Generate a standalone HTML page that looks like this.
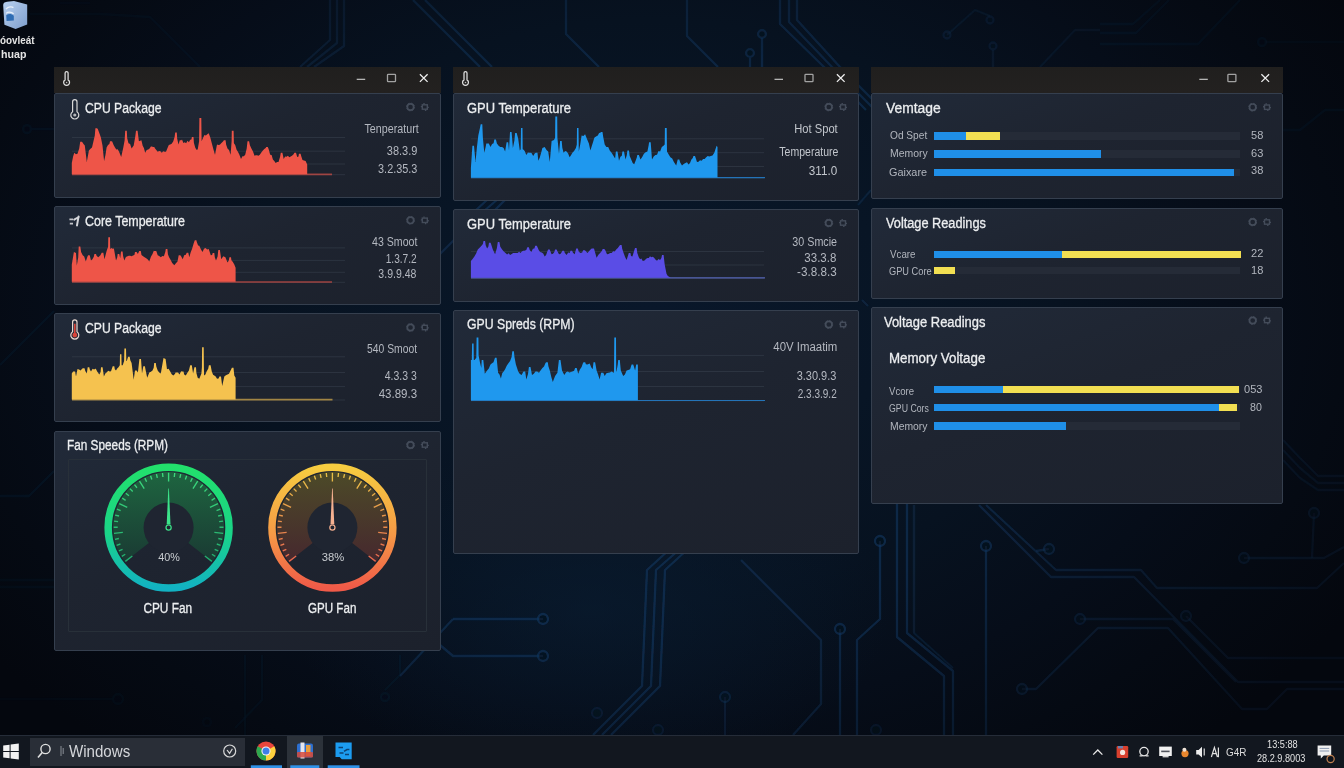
<!DOCTYPE html>
<html lang="en"><head><meta charset="utf-8"><title>Hardware Monitor Desktop</title>
<style>
*{margin:0;padding:0;box-sizing:border-box}
html,body{width:1344px;height:768px;overflow:hidden;background:#050912}
body{font-family:"Liberation Sans",sans-serif;position:relative;color:#dcdfe4}
#desk{position:absolute;left:0;top:0;width:1344px;height:768px;
 background:radial-gradient(ellipse 300px 170px at 590px 610px, rgba(10,30,52,.55) 0%, rgba(10,30,52,0) 100%),radial-gradient(ellipse 820px 580px at 650px 310px, #09172a 0%, #081525 30%, #071220 50%, #060d19 70%, #050a13 85%, #04070e 100%);}
#bgsvg,#fg{position:absolute;left:0;top:0;width:1344px;height:768px}
#fg{pointer-events:none}
.t{position:absolute;white-space:nowrap;display:block}
#texts{position:absolute;left:0;top:0;width:1344px;height:768px;will-change:transform}
.win{position:absolute}
.tb{position:absolute;left:0;top:0;width:100%;height:25.6px;background:linear-gradient(#201f1e,#232120)}
.p{position:absolute;left:0;width:100%;background:linear-gradient(160deg,#212a39 0%,#1e2430 45%,#1c212c 100%);border:1px solid #353f4e;border-radius:2px}
.bar{position:absolute;height:7.5px}
.trk{position:absolute;height:7.5px;background:#252b37}
#task{position:absolute;left:0;top:735px;width:1344px;height:33px;background:#12171f;border-top:1px solid #252c38}
#search{position:absolute;left:30px;top:1.6px;width:215px;height:28.8px;background:#292e37}
</style></head><body>
<div id="desk"></div>

<svg id="bgsvg" viewBox="0 0 1344 768"><defs><filter id="bl" x="-5%" y="-5%" width="110%" height="110%"><feGaussianBlur stdDeviation="0.75"/></filter><radialGradient id="vg" gradientUnits="userSpaceOnUse" cx="640" cy="380" r="760" gradientTransform="translate(0 118) scale(1 0.69)"><stop offset="0" stop-color="#fff"/><stop offset="0.5" stop-color="#fff"/><stop offset="0.8" stop-color="#8a8a8a"/><stop offset="1" stop-color="#555"/></radialGradient><mask id="vm" maskUnits="userSpaceOnUse" x="0" y="0" width="1344" height="768"><rect width="1344" height="768" fill="url(#vg)"/></mask></defs><g mask="url(#vm)"><g filter="url(#bl)">
<polyline points="670,549 647,570 642,686 593,735" fill="none" stroke="#123860" stroke-width="2.3" opacity="0.60" stroke-linejoin="round"/>
<polyline points="680,549 656,570 651,686 602,735" fill="none" stroke="#123860" stroke-width="2.3" opacity="0.60" stroke-linejoin="round"/>
<polyline points="688,549 665,570 660,686 611,735" fill="none" stroke="#123860" stroke-width="2.3" opacity="0.60" stroke-linejoin="round"/>
<polyline points="741,560 821,640 821,704 793,735" fill="none" stroke="#123860" stroke-width="2.3" opacity="0.50" stroke-linejoin="round"/>
<polyline points="840,629 840,735" fill="none" stroke="#123860" stroke-width="2.3" opacity="0.60" stroke-linejoin="round"/>
<circle cx="840" cy="629" r="5.0" fill="#08131f" stroke="#123860" stroke-width="2.3" opacity="0.60"/>
<polyline points="880,541 880,619 857,640 857,735" fill="none" stroke="#123860" stroke-width="2.3" opacity="0.60" stroke-linejoin="round"/>
<circle cx="880" cy="541" r="5.0" fill="#08131f" stroke="#123860" stroke-width="2.3" opacity="0.60"/>
<polyline points="897,504 897,637 944,676 944,735" fill="none" stroke="#123860" stroke-width="2.3" opacity="0.60" stroke-linejoin="round"/>
<polyline points="907,504 907,633 953,671 953,735" fill="none" stroke="#123860" stroke-width="2.3" opacity="0.60" stroke-linejoin="round"/>
<polyline points="986,546 986,735" fill="none" stroke="#123860" stroke-width="2.3" opacity="0.60" stroke-linejoin="round"/>
<circle cx="986" cy="546" r="5.0" fill="#08131f" stroke="#123860" stroke-width="2.3" opacity="0.60"/>
<polyline points="979,505 1051,577 1134,577 1238,682 1344,682" fill="none" stroke="#123860" stroke-width="2.3" opacity="0.50" stroke-linejoin="round"/>
<polyline points="986,505 1056,570 1141,570 1157,588 1317,588 1344,563" fill="none" stroke="#123860" stroke-width="2.3" opacity="0.50" stroke-linejoin="round"/>
<polyline points="1049,549 1036,551" fill="none" stroke="#123860" stroke-width="2.3" opacity="0.50" stroke-linejoin="round"/>
<circle cx="1049" cy="549" r="5.0" fill="#08131f" stroke="#123860" stroke-width="2.3" opacity="0.50"/>
<polyline points="1022,689 1036,689 1098,628 1168,628 1242,709 1267,709 1287,689 1344,689" fill="none" stroke="#123860" stroke-width="2.3" opacity="0.50" stroke-linejoin="round"/>
<circle cx="1022" cy="689" r="5.0" fill="#08131f" stroke="#123860" stroke-width="2.3" opacity="0.50"/>
<polyline points="1080,619 1173,619 1236,682" fill="none" stroke="#123860" stroke-width="2.3" opacity="0.45" stroke-linejoin="round"/>
<circle cx="1080" cy="619" r="5.0" fill="#08131f" stroke="#123860" stroke-width="2.3" opacity="0.45"/>
<polyline points="1186,616 1228,658 1344,658" fill="none" stroke="#123860" stroke-width="2.3" opacity="0.45" stroke-linejoin="round"/>
<circle cx="1186" cy="616" r="5.0" fill="#08131f" stroke="#123860" stroke-width="2.3" opacity="0.45"/>
<polyline points="1244,558 1324,558 1344,547" fill="none" stroke="#123860" stroke-width="2.3" opacity="0.50" stroke-linejoin="round"/>
<circle cx="1244" cy="558" r="5.0" fill="#08131f" stroke="#123860" stroke-width="2.3" opacity="0.50"/>
<polyline points="1314,513 1312,558" fill="none" stroke="#123860" stroke-width="2.3" opacity="0.45" stroke-linejoin="round"/>
<circle cx="1314" cy="513" r="5.0" fill="#08131f" stroke="#123860" stroke-width="2.3" opacity="0.50"/>
<polyline points="914,505 914,633 953,668" fill="none" stroke="#123860" stroke-width="2.3" opacity="0.35" stroke-linejoin="round"/>
<polyline points="453,619 543,619" fill="none" stroke="#123860" stroke-width="2.3" opacity="0.60" stroke-linejoin="round"/>
<circle cx="543" cy="619" r="5.0" fill="#08131f" stroke="#123860" stroke-width="2.3" opacity="0.60"/>
<polyline points="440,645 453,656 543,656" fill="none" stroke="#123860" stroke-width="2.3" opacity="0.60" stroke-linejoin="round"/>
<circle cx="543" cy="656" r="5.0" fill="#08131f" stroke="#123860" stroke-width="2.3" opacity="0.60"/>
<polyline points="400,676 453,619" fill="none" stroke="#123860" stroke-width="2.3" opacity="0.55" stroke-linejoin="round"/>
<polyline points="725,697 725,735" fill="none" stroke="#123860" stroke-width="2.3" opacity="0.40" stroke-linejoin="round"/>
<circle cx="725" cy="697" r="5.0" fill="#08131f" stroke="#123860" stroke-width="2.3" opacity="0.45"/>
<circle cx="597" cy="713" r="5.0" fill="#08131f" stroke="#123860" stroke-width="2.3" opacity="0.35"/>
<circle cx="658" cy="730" r="5.0" fill="#08131f" stroke="#123860" stroke-width="2.3" opacity="0.35"/>
<circle cx="876" cy="730" r="5.0" fill="#08131f" stroke="#123860" stroke-width="2.3" opacity="0.35"/>
<polyline points="0,496 29,496 54,471" fill="none" stroke="#123860" stroke-width="2.3" opacity="0.30" stroke-linejoin="round"/>
<polyline points="0,580 54,580" fill="none" stroke="#123860" stroke-width="2.3" opacity="0.22" stroke-linejoin="round"/>
<polyline points="0,587 54,587" fill="none" stroke="#123860" stroke-width="2.3" opacity="0.22" stroke-linejoin="round"/>
<polyline points="0,699 112,699" fill="none" stroke="#123860" stroke-width="2.3" opacity="0.16" stroke-linejoin="round"/>
<circle cx="118" cy="699" r="5.0" fill="#08131f" stroke="#123860" stroke-width="2.3" opacity="0.20"/>
<circle cx="27" cy="129" r="4" fill="#08131f" stroke="#123860" stroke-width="2.3" opacity="0.30"/>
<polyline points="32,129 54,129" fill="none" stroke="#123860" stroke-width="2.3" opacity="0.30" stroke-linejoin="round"/>
<polyline points="0,365 54,311" fill="none" stroke="#123860" stroke-width="2.3" opacity="0.28" stroke-linejoin="round"/>
<polyline points="245,655 245,735" fill="none" stroke="#123860" stroke-width="2.3" opacity="0.18" stroke-linejoin="round"/>
<polyline points="262,655 262,700 235,728" fill="none" stroke="#123860" stroke-width="2.3" opacity="0.18" stroke-linejoin="round"/>
<polyline points="385,690 400,675 400,655" fill="none" stroke="#123860" stroke-width="2.3" opacity="0.18" stroke-linejoin="round"/>
<circle cx="385" cy="697" r="4" fill="#08131f" stroke="#123860" stroke-width="2.3" opacity="0.18"/>
<circle cx="207" cy="722" r="4" fill="#08131f" stroke="#123860" stroke-width="2.3" opacity="0.14"/>
<polyline points="1283,440 1300,458 1318,476 1344,476" fill="none" stroke="#123860" stroke-width="2.3" opacity="0.40" stroke-linejoin="round"/>
<polyline points="1283,450 1300,468 1318,483 1344,483" fill="none" stroke="#123860" stroke-width="2.3" opacity="0.40" stroke-linejoin="round"/>
<polyline points="1283,460 1300,478 1318,490 1344,490" fill="none" stroke="#123860" stroke-width="2.3" opacity="0.40" stroke-linejoin="round"/>
<polyline points="1283,130 1300,130 1325,110 1344,110" fill="none" stroke="#123860" stroke-width="2.3" opacity="0.30" stroke-linejoin="round"/>
<circle cx="1262" cy="42" r="4" fill="#08131f" stroke="#123860" stroke-width="2.3" opacity="0.30"/>
<polyline points="1266,42 1344,42" fill="none" stroke="#123860" stroke-width="2.3" opacity="0.22" stroke-linejoin="round"/>
<polyline points="1100,24 1133,24 1160,0" fill="none" stroke="#123860" stroke-width="2.3" opacity="0.30" stroke-linejoin="round"/>
<polyline points="1100,33 1136,33 1169,0" fill="none" stroke="#123860" stroke-width="2.3" opacity="0.30" stroke-linejoin="round"/>
<polyline points="1100,44 1198,44 1240,0" fill="none" stroke="#123860" stroke-width="2.3" opacity="0.30" stroke-linejoin="round"/>
<polyline points="330,0 330,40 300,67" fill="none" stroke="#123860" stroke-width="2.3" opacity="0.50" stroke-linejoin="round"/>
<polyline points="337,0 337,43 307,67" fill="none" stroke="#123860" stroke-width="2.3" opacity="0.50" stroke-linejoin="round"/>
<polyline points="344,0 344,46 314,67" fill="none" stroke="#123860" stroke-width="2.3" opacity="0.50" stroke-linejoin="round"/>
<polyline points="413,0 480,67" fill="none" stroke="#123860" stroke-width="2.3" opacity="0.65" stroke-linejoin="round"/>
<polyline points="425,0 492,67" fill="none" stroke="#123860" stroke-width="2.3" opacity="0.65" stroke-linejoin="round"/>
<polyline points="566,0 566,34 599,67" fill="none" stroke="#123860" stroke-width="2.3" opacity="0.60" stroke-linejoin="round"/>
<polyline points="687,0 687,36 718,67" fill="none" stroke="#123860" stroke-width="2.3" opacity="0.60" stroke-linejoin="round"/>
<circle cx="762" cy="34" r="3.9" fill="#08131f" stroke="#123860" stroke-width="2.3" opacity="0.65"/>
<polyline points="762,38 762,67" fill="none" stroke="#123860" stroke-width="2.3" opacity="0.65" stroke-linejoin="round"/>
<circle cx="750" cy="53" r="3.9" fill="#08131f" stroke="#123860" stroke-width="2.3" opacity="0.60"/>
<polyline points="750,58 750,67" fill="none" stroke="#123860" stroke-width="2.3" opacity="0.60" stroke-linejoin="round"/>
<polyline points="780,0 780,24 824,67 866,110" fill="none" stroke="#123860" stroke-width="2.3" opacity="0.65" stroke-linejoin="round"/>
<polyline points="789,0 789,22 832,67 875,110" fill="none" stroke="#123860" stroke-width="2.3" opacity="0.65" stroke-linejoin="round"/>
<polyline points="797,0 797,20 840,67 883,110" fill="none" stroke="#123860" stroke-width="2.3" opacity="0.65" stroke-linejoin="round"/>
<circle cx="947" cy="35" r="3.5" fill="#08131f" stroke="#123860" stroke-width="2.3" opacity="0.45"/>
<circle cx="990" cy="20" r="3.5" fill="#08131f" stroke="#123860" stroke-width="2.3" opacity="0.45"/>
<circle cx="993" cy="46" r="3.5" fill="#08131f" stroke="#123860" stroke-width="2.3" opacity="0.45"/>
<polyline points="947,35 975,10 990,16" fill="none" stroke="#123860" stroke-width="2.3" opacity="0.35" stroke-linejoin="round"/>
<polyline points="993,50 993,67" fill="none" stroke="#123860" stroke-width="2.3" opacity="0.35" stroke-linejoin="round"/>
<polyline points="1040,67 1075,30 1100,30" fill="none" stroke="#123860" stroke-width="2.3" opacity="0.35" stroke-linejoin="round"/>
<polyline points="30,14 100,14 150,17 200,67" fill="none" stroke="#123860" stroke-width="2.3" opacity="0.22" stroke-linejoin="round"/>
<polyline points="60,3 90,3" fill="none" stroke="#123860" stroke-width="2.3" opacity="0.15" stroke-linejoin="round"/>
<polyline points="858,205 871,190" fill="none" stroke="#123860" stroke-width="2.3" opacity="0.35" stroke-linejoin="round"/>
<polyline points="862,300 868,306" fill="none" stroke="#123860" stroke-width="2.3" opacity="0.40" stroke-linejoin="round"/>
<polyline points="475,211 488,199" fill="none" stroke="#123860" stroke-width="2.3" opacity="0.60" stroke-linejoin="round"/>
<polyline points="484,211 498,199" fill="none" stroke="#123860" stroke-width="2.3" opacity="0.60" stroke-linejoin="round"/>
<polyline points="494,211 506,199" fill="none" stroke="#123860" stroke-width="2.3" opacity="0.60" stroke-linejoin="round"/>
<polyline points="440,254 454,240" fill="none" stroke="#123860" stroke-width="2.3" opacity="0.50" stroke-linejoin="round"/>
</g></g></svg>
<div id="icon" style="position:absolute;left:0;top:0;width:40px;height:62px"></div>
<div class="win" style="left:54px;top:67px;width:387px;height:0"><div class="tb"></div><div class="p" style="top:26px;height:104.5px"></div><div class="p" style="top:139px;height:98.60000000000002px"></div><div class="p" style="top:246px;height:109px"></div><div class="p" style="top:364px;height:220px"></div></div>
<div class="win" style="left:453px;top:67px;width:406px;height:0"><div class="tb"></div><div class="p" style="top:26px;height:107.5px"></div><div class="p" style="top:142px;height:92.80000000000001px"></div><div class="p" style="top:243.2px;height:244.2px"></div></div>
<div class="win" style="left:871px;top:67px;width:412px;height:0"><div class="tb"></div><div class="p" style="top:26px;height:106px"></div><div class="p" style="top:141px;height:90.5px"></div><div class="p" style="top:239.5px;height:197.5px"></div></div>
<div style="position:absolute;left:68px;top:459px;width:359px;height:173px;border:1px solid #283039;border-radius:1px"></div>
<div class="trk" style="left:933.7px;top:132.3px;width:306.3px"></div><div class="bar" style="left:933.7px;top:132.3px;width:32.3px;background:#1f8fe8"></div><div class="bar" style="left:966.0px;top:132.3px;width:34.2px;background:#f2df52"></div><div class="trk" style="left:933.7px;top:150.4px;width:306.3px"></div><div class="bar" style="left:933.7px;top:150.4px;width:167.3px;background:#1f8fe8"></div><div class="trk" style="left:933.7px;top:168.6px;width:306.3px"></div><div class="bar" style="left:933.7px;top:168.6px;width:300.5px;background:#1f8fe8"></div><div class="trk" style="left:933.7px;top:250.8px;width:306.3px"></div><div class="bar" style="left:933.7px;top:250.8px;width:128.3px;background:#1f8fe8"></div><div class="bar" style="left:1062.0px;top:250.8px;width:179.4px;background:#f2df52"></div><div class="trk" style="left:933.7px;top:266.6px;width:306.3px"></div><div class="bar" style="left:933.7px;top:266.6px;width:20.9px;background:#f2df52"></div><div class="trk" style="left:933.7px;top:385.9px;width:306.3px"></div><div class="bar" style="left:933.7px;top:385.9px;width:69.7px;background:#1f8fe8"></div><div class="bar" style="left:1003.4px;top:385.9px;width:235.4px;background:#f2df52"></div><div class="trk" style="left:933.7px;top:403.9px;width:306.3px"></div><div class="bar" style="left:933.7px;top:403.9px;width:285.3px;background:#1f8fe8"></div><div class="bar" style="left:1219.0px;top:403.9px;width:17.5px;background:#f2df52"></div><div class="trk" style="left:933.7px;top:422.1px;width:306.3px"></div><div class="bar" style="left:933.7px;top:422.1px;width:131.9px;background:#1f8fe8"></div>
<div id="task"><div id="search"></div></div>
<svg id="fg" viewBox="0 0 1344 768"><line x1="72.0" y1="137.5" x2="345.0" y2="137.5" stroke="#39424f" stroke-width="1" opacity="0.55"/><line x1="72.0" y1="151.2" x2="345.0" y2="151.2" stroke="#39424f" stroke-width="1" opacity="0.55"/><line x1="72.0" y1="164.0" x2="345.0" y2="164.0" stroke="#39424f" stroke-width="1" opacity="0.55"/><line x1="72.0" y1="174.7" x2="345.0" y2="174.7" stroke="#39424f" stroke-width="1" opacity="0.55"/><line x1="72.0" y1="174.4" x2="332.0" y2="174.4" stroke="#ee5548" stroke-width="1.7" opacity="0.6"/><path d="M71.8,174.2 L71.8,163.1 L73.1,156.5 L74.3,152.7 L75.9,154.2 L77.5,153.8 L79.2,148.4 L80.2,141.7 L81.8,141.7 L82.2,141.9 L83.5,144.0 L84.8,145.4 L86.8,162.1 L88.9,150.6 L90.5,148.7 L92.0,147.5 L93.4,141.4 L94.8,135.5 L95.4,128.3 L97.0,128.3 L97.8,129.0 L99.3,132.9 L100.9,137.4 L102.5,145.4 L104.1,161.0 L105.4,155.2 L106.6,147.5 L108.0,145.0 L109.4,144.0 L110.0,141.2 L111.6,141.2 L112.2,141.4 L113.6,145.0 L115.0,147.5 L116.3,149.5 L117.7,149.2 L119.1,151.7 L121.2,156.9 L123.3,147.5 L124.6,140.5 L125.2,130.8 L126.8,130.8 L127.2,138.3 L128.5,143.3 L130.1,144.1 L131.6,148.5 L133.7,145.4 L135.3,136.3 L136.0,130.8 L137.6,130.8 L138.9,141.2 L140.2,140.7 L141.4,140.2 L142.7,145.7 L143.9,147.9 L145.2,152.7 L146.7,150.0 L148.3,149.6 L149.6,148.5 L150.9,146.5 L152.2,146.6 L152.7,147.1 L154.3,147.1 L154.9,148.2 L156.3,149.9 L157.7,151.7 L159.1,150.9 L160.4,151.3 L161.8,152.7 L163.2,151.2 L164.6,151.7 L166.0,151.7 L167.4,148.3 L168.8,145.0 L170.2,144.4 L171.7,143.8 L173.3,141.2 L174.6,136.9 L175.2,132.5 L176.8,132.5 L177.2,138.7 L178.5,144.4 L179.8,140.2 L181.4,140.2 L182.0,139.6 L183.4,143.1 L184.8,142.3 L186.1,143.3 L187.5,140.8 L188.9,142.3 L190.2,139.8 L191.4,139.4 L191.9,137.1 L193.5,137.1 L193.9,142.8 L195.2,147.5 L196.4,149.8 L197.7,149.6 L199.1,141.2 L199.4,117.9 L201.3,117.9 L201.6,141.2 L203.1,137.7 L204.5,135.0 L205.9,135.4 L207.3,134.3 L208.7,133.3 L210.3,137.5 L211.8,143.3 L213.4,149.2 L215.0,154.8 L217.0,144.4 L218.4,145.1 L219.8,144.7 L221.2,143.3 L223.0,141.6 L223.9,140.2 L225.6,140.2 L226.1,144.5 L227.5,148.5 L229.0,149.9 L230.6,154.8 L231.6,141.2 L231.8,130.8 L233.6,130.8 L233.9,143.3 L235.2,145.0 L236.6,149.7 L237.9,151.7 L239.4,154.8 L241.0,159.0 L242.4,156.3 L243.8,156.2 L245.2,154.8 L246.7,148.5 L247.5,141.2 L249.1,141.2 L249.9,145.3 L251.4,148.5 L253.0,151.6 L254.5,155.8 L255.8,155.2 L257.1,155.2 L258.4,155.8 L259.8,154.8 L261.3,152.6 L262.9,150.6 L264.3,148.9 L265.7,148.0 L266.2,147.1 L267.8,147.1 L268.6,149.1 L270.2,154.8 L271.6,155.1 L272.9,159.5 L274.3,161.0 L275.7,162.9 L277.1,161.9 L278.5,162.1 L280.1,156.8 L280.8,152.7 L282.4,152.7 L283.7,159.0 L285.1,156.6 L286.5,156.7 L287.9,155.8 L289.3,157.3 L290.7,156.6 L292.0,155.8 L293.6,154.2 L294.4,152.7 L296.0,152.7 L297.2,156.9 L298.5,156.4 L298.9,153.8 L300.6,153.8 L301.1,155.8 L302.5,160.0 L304.0,160.4 L305.6,161.0 L307.2,164.6 L307.2,174.2 Z" fill="#ee5548"/><line x1="72.0" y1="247.9" x2="345.0" y2="247.9" stroke="#39424f" stroke-width="1" opacity="0.55"/><line x1="72.0" y1="260.4" x2="345.0" y2="260.4" stroke="#39424f" stroke-width="1" opacity="0.55"/><line x1="72.0" y1="272.3" x2="345.0" y2="272.3" stroke="#39424f" stroke-width="1" opacity="0.55"/><line x1="72.0" y1="282.3" x2="345.0" y2="282.3" stroke="#39424f" stroke-width="1" opacity="0.55"/><line x1="72.0" y1="282.0" x2="332.0" y2="282.0" stroke="#ee5548" stroke-width="1.7" opacity="0.6"/><path d="M71.8,281.8 L71.8,264.5 L73.9,252.0 L76.0,253.1 L76.8,265.6 L78.2,257.4 L78.7,246.4 L80.3,246.4 L81.1,252.1 L82.7,255.2 L84.2,256.6 L85.8,261.4 L87.4,256.7 L88.1,255.2 L89.7,255.2 L91.0,260.4 L92.4,259.2 L93.8,256.8 L94.4,254.1 L96.0,254.1 L96.7,256.1 L98.3,257.2 L100.4,255.2 L101.7,252.7 L103.3,252.7 L104.5,259.3 L106.6,251.0 L108.1,246.8 L108.3,237.2 L110.0,237.2 L110.2,248.9 L111.4,247.9 L112.7,248.8 L113.9,248.5 L116.0,260.4 L117.2,257.4 L117.7,254.1 L119.3,254.1 L120.2,258.3 L121.0,251.4 L122.6,251.4 L123.1,256.0 L124.3,260.4 L125.9,256.9 L127.5,256.2 L128.8,255.8 L130.2,255.7 L131.6,256.2 L133.0,255.4 L134.4,254.9 L135.0,252.0 L136.6,252.0 L137.9,254.1 L139.2,251.0 L140.8,251.0 L141.5,255.0 L143.1,256.2 L144.6,257.2 L146.2,258.3 L147.8,259.5 L149.3,261.4 L150.9,256.8 L152.5,254.1 L153.8,250.8 L154.4,251.0 L156.0,251.0 L156.4,251.3 L157.7,255.2 L159.2,255.9 L160.8,257.2 L162.4,255.9 L163.9,256.2 L165.3,252.0 L165.8,248.9 L167.4,248.9 L167.9,254.2 L169.1,257.2 L170.7,260.1 L172.2,263.1 L174.3,265.2 L175.9,263.3 L177.5,261.4 L178.7,255.2 L180.3,255.2 L181.1,256.2 L182.7,259.3 L184.2,255.2 L185.8,254.8 L186.7,252.7 L188.3,252.7 L189.3,257.2 L190.7,252.3 L192.0,248.9 L193.8,243.1 L194.8,240.2 L196.4,240.2 L196.8,241.9 L198.1,245.4 L199.3,245.8 L200.9,249.3 L202.5,252.0 L204.0,248.7 L205.6,247.9 L207.1,249.6 L208.7,248.9 L210.8,255.2 L212.1,254.9 L212.7,253.1 L214.3,253.1 L214.8,257.3 L216.0,260.4 L217.6,256.4 L218.3,250.0 L219.9,250.0 L221.2,259.3 L223.3,256.2 L225.4,257.2 L227.5,262.5 L228.8,260.6 L229.4,257.2 L231.0,257.2 L231.4,260.3 L232.7,261.8 L234.3,264.5 L235.6,267.7 L235.6,281.8 Z" fill="#ee5548"/><line x1="72.0" y1="356.8" x2="345.0" y2="356.8" stroke="#39424f" stroke-width="1" opacity="0.55"/><line x1="72.0" y1="372.5" x2="345.0" y2="372.5" stroke="#39424f" stroke-width="1" opacity="0.55"/><line x1="72.0" y1="386.6" x2="345.0" y2="386.6" stroke="#39424f" stroke-width="1" opacity="0.55"/><line x1="72.0" y1="400.0" x2="345.0" y2="400.0" stroke="#39424f" stroke-width="1" opacity="0.55"/><line x1="72.0" y1="399.7" x2="332.5" y2="399.7" stroke="#f5c24f" stroke-width="1.7" opacity="0.6"/><path d="M71.8,399.5 L71.8,373.5 L73.1,371.4 L73.5,371.4 L75.1,371.4 L76.0,376.6 L77.5,368.9 L79.0,369.6 L80.6,370.4 L82.1,368.7 L82.9,368.3 L84.5,368.3 L85.3,371.1 L86.8,373.5 L87.7,367.2 L89.3,367.2 L89.8,369.6 L91.0,371.4 L92.6,368.7 L93.3,369.3 L94.9,369.3 L95.7,368.5 L97.2,371.4 L99.3,374.5 L100.6,371.9 L101.0,367.2 L102.6,367.2 L103.9,376.6 L105.3,373.5 L106.6,372.5 L108.2,370.8 L109.8,371.4 L111.0,371.2 L112.2,367.7 L112.7,366.2 L114.3,366.2 L114.8,369.3 L116.0,370.4 L117.2,368.5 L118.5,367.2 L119.8,365.2 L120.0,354.3 L121.4,354.3 L121.6,365.2 L122.7,365.2 L124.1,361.0 L124.4,348.5 L126.0,348.5 L126.3,361.0 L126.8,361.0 L128.1,356.8 L129.7,356.8 L130.3,360.2 L131.6,363.1 L133.7,379.8 L135.0,370.4 L136.6,370.4 L137.9,372.5 L139.4,358.9 L141.0,358.9 L142.0,373.5 L143.3,366.2 L144.9,366.2 L145.7,370.6 L147.2,377.7 L149.3,372.5 L150.9,371.7 L152.5,370.4 L153.7,367.8 L154.2,363.1 L155.8,363.1 L156.3,366.6 L157.7,370.4 L159.2,372.6 L160.8,373.5 L162.1,366.1 L163.5,357.9 L165.6,358.9 L167.0,369.3 L168.6,368.7 L170.2,371.4 L171.7,374.2 L173.3,375.6 L174.9,374.1 L175.6,372.5 L177.2,372.5 L178.0,372.6 L179.5,374.5 L181.1,371.2 L181.9,371.4 L183.5,371.4 L184.2,374.6 L185.8,375.6 L187.4,372.7 L188.9,370.4 L190.2,365.2 L191.8,365.2 L193.1,373.5 L194.4,367.2 L196.0,367.2 L196.4,373.0 L197.7,377.7 L199.3,378.7 L201.4,373.5 L201.9,367.2 L202.1,347.2 L203.7,347.2 L203.9,367.2 L204.1,375.6 L205.4,374.6 L206.6,371.4 L208.2,368.8 L208.9,365.2 L210.6,365.2 L211.8,371.4 L213.1,374.8 L214.3,375.6 L215.7,376.6 L217.0,378.7 L218.6,378.5 L219.4,376.6 L221.0,376.6 L222.2,386.0 L224.3,376.6 L225.9,375.2 L227.5,374.5 L229.0,373.8 L230.6,370.4 L231.9,367.7 L233.5,367.7 L234.3,375.6 L235.6,377.7 L235.6,399.5 Z" fill="#f5c24f"/><line x1="471.0" y1="138.8" x2="764.0" y2="138.8" stroke="#39424f" stroke-width="1" opacity="0.55"/><line x1="471.0" y1="152.7" x2="764.0" y2="152.7" stroke="#39424f" stroke-width="1" opacity="0.55"/><line x1="471.0" y1="166.5" x2="764.0" y2="166.5" stroke="#39424f" stroke-width="1" opacity="0.55"/><line x1="471.0" y1="177.9" x2="764.0" y2="177.9" stroke="#39424f" stroke-width="1" opacity="0.55"/><line x1="471.0" y1="177.6" x2="765.0" y2="177.6" stroke="#2486d8" stroke-width="1.2" opacity="0.8"/><path d="M470.9,177.4 L470.9,167.7 L472.4,145.8 L474.0,145.8 L475.5,161.9 L476.9,147.5 L478.3,135.4 L479.9,128.3 L480.7,124.3 L482.3,124.3 L482.9,137.9 L484.3,152.7 L485.7,146.7 L486.3,143.4 L487.9,143.4 L488.8,143.5 L490.5,146.9 L492.1,143.9 L493.6,143.2 L494.3,139.5 L495.9,139.5 L496.9,143.5 L498.6,145.8 L500.3,147.0 L502.1,146.9 L503.6,148.1 L505.1,151.5 L506.6,142.3 L508.2,142.3 L509.0,150.4 L510.0,131.9 L511.6,131.9 L512.9,148.1 L514.4,140.5 L515.1,133.1 L516.7,133.1 L518.2,138.8 L519.8,150.4 L520.7,149.2 L521.0,128.0 L522.5,128.0 L522.7,149.2 L523.0,149.2 L524.7,151.1 L526.3,155.0 L528.0,152.5 L528.9,152.7 L530.5,152.7 L531.5,152.9 L533.2,156.1 L534.9,153.2 L535.9,152.7 L537.5,152.7 L538.3,160.7 L539.7,157.8 L541.0,153.2 L542.4,148.1 L544.7,146.9 L546.5,150.1 L548.2,151.5 L549.8,161.9 L551.6,141.1 L554.0,140.0 L555.1,137.7 L555.3,116.5 L557.2,116.5 L557.4,137.7 L559.0,153.8 L560.1,141.1 L561.7,141.1 L562.3,147.7 L563.6,152.7 L565.1,150.9 L566.6,151.5 L568.1,153.6 L569.6,157.3 L571.0,155.2 L572.4,152.7 L574.1,151.0 L575.9,148.1 L576.8,144.6 L577.0,128.0 L578.5,128.0 L578.8,151.5 L580.2,144.5 L581.6,135.4 L583.4,135.9 L585.1,134.2 L587.4,140.0 L588.9,143.6 L590.4,150.4 L591.7,146.3 L593.0,142.3 L594.3,137.7 L596.0,136.4 L597.8,135.4 L599.1,132.9 L600.4,132.8 L600.9,131.9 L602.5,131.9 L603.2,136.7 L604.7,144.6 L606.4,147.0 L608.2,146.9 L609.9,150.8 L611.6,152.7 L613.3,155.5 L615.1,158.4 L615.9,151.5 L617.5,151.5 L619.0,160.7 L620.4,156.8 L621.8,155.8 L622.4,151.5 L624.0,151.5 L625.5,159.6 L626.8,155.0 L627.4,150.4 L629.0,150.4 L629.7,156.1 L631.2,159.6 L632.7,162.9 L634.2,164.2 L635.5,161.0 L636.8,157.6 L637.3,155.0 L638.9,155.0 L640.5,159.6 L642.2,156.9 L643.9,153.8 L645.6,152.2 L647.4,151.5 L648.6,145.6 L649.1,142.3 L650.7,142.3 L652.0,159.6 L653.7,156.4 L655.4,155.0 L657.0,154.7 L658.5,150.9 L660.1,151.5 L661.8,146.9 L663.5,145.8 L664.7,144.6 L664.9,128.0 L666.7,128.0 L667.0,151.5 L668.7,154.6 L670.4,157.3 L672.2,158.6 L673.9,161.9 L676.2,165.4 L677.7,159.6 L679.3,159.6 L680.2,162.4 L682.0,165.4 L683.7,163.9 L685.4,163.1 L687.0,162.3 L688.5,164.6 L690.0,163.1 L691.4,159.5 L692.8,157.9 L693.4,156.1 L695.0,156.1 L695.6,157.8 L697.0,161.9 L698.5,161.8 L700.0,160.2 L701.6,160.7 L703.1,158.9 L704.6,159.1 L706.2,157.3 L707.7,156.1 L709.3,156.5 L710.8,156.1 L712.5,155.6 L714.3,152.7 L716.6,145.8 L717.5,146.9 L717.5,177.4 Z" fill="#1f98ee"/><line x1="471.0" y1="251.5" x2="764.0" y2="251.5" stroke="#39424f" stroke-width="1" opacity="0.55"/><line x1="471.0" y1="265.0" x2="764.0" y2="265.0" stroke="#39424f" stroke-width="1" opacity="0.55"/><line x1="471.0" y1="278.2" x2="764.0" y2="278.2" stroke="#39424f" stroke-width="1" opacity="0.55"/><line x1="471.0" y1="277.9" x2="765.0" y2="277.9" stroke="#5f70cc" stroke-width="1.2" opacity="0.85"/><path d="M470.9,277.7 L470.9,261.1 L472.6,259.0 L474.4,256.5 L476.1,253.5 L477.8,249.6 L480.1,247.3 L481.5,245.8 L482.9,244.1 L483.5,241.1 L485.1,241.1 L485.7,245.2 L487.1,248.5 L488.4,246.5 L489.0,242.7 L490.6,242.7 L491.3,244.8 L492.8,249.6 L495.1,254.2 L496.9,247.9 L497.8,242.0 L499.4,242.0 L500.3,246.8 L502.1,249.6 L503.8,251.6 L505.5,253.1 L507.1,254.6 L508.6,253.2 L510.1,254.9 L511.7,254.1 L513.2,252.9 L514.7,253.1 L516.2,253.0 L517.6,253.1 L519.1,251.7 L520.5,253.1 L521.8,251.4 L523.1,250.8 L524.4,250.8 L526.3,249.9 L527.3,247.3 L528.9,247.3 L529.7,250.1 L531.4,251.9 L532.9,248.8 L534.4,248.4 L535.2,245.7 L536.8,245.7 L537.3,246.7 L538.7,250.0 L540.1,251.9 L541.7,252.4 L543.2,253.6 L544.7,256.5 L546.1,255.0 L547.5,251.0 L548.1,249.6 L549.7,249.6 L550.3,251.1 L551.6,254.2 L553.0,253.8 L554.4,251.9 L555.0,249.6 L556.6,249.6 L557.4,251.2 L559.0,254.2 L560.4,254.1 L561.8,251.9 L562.4,250.8 L564.0,250.8 L564.9,253.1 L566.6,254.9 L568.2,252.6 L569.7,253.1 L570.5,250.8 L572.1,250.8 L573.0,252.8 L574.7,254.2 L576.2,248.5 L577.8,248.5 L578.8,251.8 L580.5,253.1 L582.2,252.5 L583.1,250.3 L584.7,250.3 L585.7,251.0 L587.4,253.1 L588.8,251.4 L590.3,249.8 L591.7,248.6 L592.4,248.5 L594.0,248.5 L594.9,251.8 L596.6,257.7 L598.4,254.7 L600.1,253.1 L601.8,251.1 L602.7,248.9 L604.3,248.9 L605.3,250.2 L607.0,254.2 L608.5,254.1 L610.1,252.9 L611.6,253.1 L613.2,251.3 L614.7,251.4 L616.2,249.6 L617.8,247.9 L619.3,245.9 L620.0,245.0 L621.6,245.0 L622.2,248.8 L623.6,253.1 L625.1,256.9 L626.6,260.0 L628.1,255.3 L628.8,253.1 L630.4,253.1 L631.0,255.9 L632.4,256.5 L634.1,250.9 L635.0,248.0 L636.6,248.0 L637.3,253.1 L638.8,257.2 L640.1,259.3 L641.4,258.5 L642.8,261.1 L644.5,260.6 L646.2,258.8 L647.5,258.0 L648.8,258.1 L650.0,256.2 L651.3,257.2 L652.7,256.7 L654.1,257.8 L655.4,259.5 L657.0,260.7 L658.5,258.9 L660.1,260.0 L661.4,258.0 L662.0,254.9 L663.6,254.9 L664.7,264.6 L666.5,273.8 L667.8,276.0 L669.1,276.7 L670.4,277.5 L670.4,277.7 Z" fill="#5a4de6"/><line x1="471.0" y1="355.4" x2="764.0" y2="355.4" stroke="#39424f" stroke-width="1" opacity="0.55"/><line x1="471.0" y1="371.5" x2="764.0" y2="371.5" stroke="#39424f" stroke-width="1" opacity="0.55"/><line x1="471.0" y1="386.5" x2="764.0" y2="386.5" stroke="#39424f" stroke-width="1" opacity="0.55"/><line x1="471.0" y1="400.8" x2="764.0" y2="400.8" stroke="#39424f" stroke-width="1" opacity="0.55"/><line x1="471.0" y1="400.5" x2="765.0" y2="400.5" stroke="#2486d8" stroke-width="1.2" opacity="0.8"/><path d="M470.9,400.3 L470.9,360.0 L471.8,360.0 L472.1,343.4 L473.6,343.4 L473.8,360.0 L474.6,360.0 L476.3,357.7 L476.6,337.4 L478.4,337.4 L478.6,355.4 L480.0,362.5 L481.3,368.1 L481.7,360.0 L483.3,360.0 L484.8,373.8 L487.1,370.4 L488.8,368.4 L490.5,364.6 L492.0,363.2 L493.5,362.3 L495.0,357.7 L496.6,357.7 L498.1,372.7 L499.5,374.5 L500.9,378.4 L502.3,373.1 L503.7,371.5 L505.2,369.0 L506.7,365.8 L508.4,363.2 L510.1,361.1 L511.6,356.9 L512.3,351.2 L513.9,351.2 L514.5,357.3 L515.9,364.6 L518.2,371.5 L519.9,374.0 L521.7,375.0 L523.0,372.3 L523.6,371.5 L525.2,371.5 L526.3,379.6 L528.0,374.1 L528.9,366.9 L530.5,366.9 L532.0,375.0 L533.8,373.8 L535.5,371.5 L537.2,371.6 L539.0,372.7 L540.7,370.3 L542.4,368.1 L544.0,366.6 L545.5,363.0 L546.2,362.3 L547.8,362.3 L548.4,366.3 L549.8,370.4 L551.3,377.0 L552.8,381.9 L555.1,376.1 L557.4,372.7 L558.9,360.0 L560.5,360.0 L562.0,370.4 L564.3,375.0 L566.1,372.3 L567.8,371.5 L569.3,372.4 L570.9,372.0 L572.4,371.5 L574.1,370.8 L575.1,368.1 L576.7,368.1 L578.2,373.8 L579.9,369.6 L581.6,366.9 L583.0,363.0 L583.6,362.3 L585.2,362.3 L585.9,364.3 L587.4,364.6 L589.7,363.4 L591.2,367.2 L592.7,369.2 L593.5,362.3 L595.1,362.3 L596.6,370.4 L598.1,374.6 L599.6,379.6 L601.1,372.7 L602.7,372.7 L603.3,372.8 L604.7,376.1 L606.4,373.2 L608.2,372.7 L609.9,372.4 L611.6,371.5 L613.9,372.7 L614.0,371.5 L614.3,337.4 L616.0,337.4 L616.2,371.5 L616.5,371.5 L617.7,364.8 L618.2,360.0 L619.8,360.0 L620.8,370.4 L623.2,376.1 L624.9,374.6 L626.6,370.4 L628.3,369.9 L630.1,369.2 L631.6,364.6 L633.2,364.6 L633.8,366.3 L635.1,370.4 L636.2,364.6 L637.8,364.6 L637.9,366.9 L637.9,400.3 Z" fill="#1f98ee"/><defs><linearGradient id="rga" x1="0" y1="0" x2="0" y2="1"><stop offset="0" stop-color="#22e06c"/><stop offset="0.55" stop-color="#1ad488"/><stop offset="1" stop-color="#12b2c2"/></linearGradient><linearGradient id="dga" gradientUnits="userSpaceOnUse" x1="0" y1="472.1" x2="0" y2="562.01"><stop offset="0" stop-color="#1e6540"/><stop offset="1" stop-color="#1a3a33"/></linearGradient><linearGradient id="tga" gradientUnits="userSpaceOnUse" x1="0" y1="472.1" x2="0" y2="562.01"><stop offset="0" stop-color="#3ee080"/><stop offset="1" stop-color="#22b070"/></linearGradient></defs><path d="M168.6,527.6 L124.87,561.77 A55.5,55.5 0 1 1 212.33,561.77 Z" fill="url(#dga)"/><circle cx="168.6" cy="527.6" r="25" fill="#1f2531"/><path d="M125.34,561.40L132.35,555.92M121.84,556.37L125.25,554.27M118.92,550.98L122.54,549.27M116.63,545.29L120.42,544.00M114.98,539.39L118.89,538.53M114.00,533.34L122.85,532.41M113.70,527.22L117.70,527.24M114.09,521.10L118.06,521.57M115.15,515.06L119.04,515.98M116.88,509.18L120.65,510.53M119.26,503.53L127.26,507.43M122.25,498.18L125.62,500.33M125.81,493.20L128.93,495.71M129.92,488.64L132.73,491.48M134.50,484.58L136.98,487.71M139.51,481.04L144.22,488.59M144.88,478.09L146.61,481.70M150.55,475.75L151.86,479.53M156.44,474.06L157.32,477.96M162.48,473.04L162.93,477.02M168.60,472.70L168.60,481.60M174.72,473.04L174.27,477.02M180.76,474.06L179.88,477.96M186.65,475.75L185.34,479.53M192.32,478.09L190.59,481.70M197.69,481.04L192.98,488.59M202.70,484.58L200.22,487.71M207.28,488.64L204.47,491.48M211.39,493.20L208.27,495.71M214.95,498.18L211.58,500.33M217.94,503.53L209.94,507.43M220.32,509.18L216.55,510.53M222.05,515.06L218.16,515.98M223.11,521.10L219.14,521.57M223.50,527.22L219.50,527.24M223.20,533.34L214.35,532.41M222.22,539.39L218.31,538.53M220.57,545.29L216.78,544.00M218.28,550.98L214.66,549.27M215.36,556.37L211.95,554.27M211.86,561.40L204.85,555.92" stroke="url(#tga)" stroke-width="1.35" fill="none" opacity="0.95"/><circle cx="168.6" cy="527.6" r="60.45" fill="none" stroke="url(#rga)" stroke-width="7.5"/><path d="M166.7,524.6 L168.29999999999998,488.6 L168.9,488.6 L170.5,524.6 Z" fill="#3ce48a"/><circle cx="168.6" cy="527.6" r="2.6" fill="#1f2531" stroke="#3ce48a" stroke-width="1.2"/><defs><linearGradient id="rgb" x1="0" y1="0" x2="0" y2="1"><stop offset="0" stop-color="#f6cc40"/><stop offset="0.55" stop-color="#f59a46"/><stop offset="1" stop-color="#f05a48"/></linearGradient><linearGradient id="dgb" gradientUnits="userSpaceOnUse" x1="0" y1="472.1" x2="0" y2="562.01"><stop offset="0" stop-color="#4c4a28"/><stop offset="1" stop-color="#46282e"/></linearGradient><linearGradient id="tgb" gradientUnits="userSpaceOnUse" x1="0" y1="472.1" x2="0" y2="562.01"><stop offset="0" stop-color="#f0c848"/><stop offset="1" stop-color="#f06850"/></linearGradient></defs><path d="M332.4,527.6 L288.67,561.77 A55.5,55.5 0 1 1 376.13,561.77 Z" fill="url(#dgb)"/><circle cx="332.4" cy="527.6" r="25" fill="#1f2531"/><path d="M289.14,561.40L296.15,555.92M285.64,556.37L289.05,554.27M282.72,550.98L286.34,549.27M280.43,545.29L284.22,544.00M278.78,539.39L282.69,538.53M277.80,533.34L286.65,532.41M277.50,527.22L281.50,527.24M277.89,521.10L281.86,521.57M278.95,515.06L282.84,515.98M280.68,509.18L284.45,510.53M283.06,503.53L291.06,507.43M286.05,498.18L289.42,500.33M289.61,493.20L292.73,495.71M293.72,488.64L296.53,491.48M298.30,484.58L300.78,487.71M303.31,481.04L308.02,488.59M308.68,478.09L310.41,481.70M314.35,475.75L315.66,479.53M320.24,474.06L321.12,477.96M326.28,473.04L326.73,477.02M332.40,472.70L332.40,481.60M338.52,473.04L338.07,477.02M344.56,474.06L343.68,477.96M350.45,475.75L349.14,479.53M356.12,478.09L354.39,481.70M361.49,481.04L356.78,488.59M366.50,484.58L364.02,487.71M371.08,488.64L368.27,491.48M375.19,493.20L372.07,495.71M378.75,498.18L375.38,500.33M381.74,503.53L373.74,507.43M384.12,509.18L380.35,510.53M385.85,515.06L381.96,515.98M386.91,521.10L382.94,521.57M387.30,527.22L383.30,527.24M387.00,533.34L378.15,532.41M386.02,539.39L382.11,538.53M384.37,545.29L380.58,544.00M382.08,550.98L378.46,549.27M379.16,556.37L375.75,554.27M375.66,561.40L368.65,555.92" stroke="url(#tgb)" stroke-width="1.35" fill="none" opacity="0.95"/><circle cx="332.4" cy="527.6" r="60.45" fill="none" stroke="url(#rgb)" stroke-width="7.5"/><path d="M330.5,524.6 L332.09999999999997,488.6 L332.7,488.6 L334.29999999999995,524.6 Z" fill="#f5b090"/><circle cx="332.4" cy="527.6" r="2.6" fill="#1f2531" stroke="#f5b090" stroke-width="1.2"/><path d="M65.10,79.91 L65.10,73.10 A1.50,1.50 0 0 1 68.10,73.10 L68.10,79.91 A2.95,2.95 0 1 1 65.10,79.91 Z" fill="none" stroke="#e0e0e0" stroke-width="1.25"/><circle cx="66.6" cy="82.44999999999999" r="0.80" fill="#e0e0e0" opacity="0.8"/><path d="M464.00,79.91 L464.00,73.10 A1.50,1.50 0 0 1 467.00,73.10 L467.00,79.91 A2.95,2.95 0 1 1 464.00,79.91 Z" fill="none" stroke="#e0e0e0" stroke-width="1.25"/><circle cx="465.5" cy="82.44999999999999" r="0.80" fill="#e0e0e0" opacity="0.8"/><path d="M72.60,111.66 L72.60,101.90 A2.20,2.20 0 0 1 77.00,101.90 L77.00,111.66 A4.0,4.0 0 1 1 72.60,111.66 Z" fill="none" stroke="#d8d8d8" stroke-width="1.2"/><circle cx="74.8" cy="115.0" r="1.60" fill="#d8d8d8" opacity="0.8"/><path d="M72.60,331.76 L72.60,322.00 A2.20,2.20 0 0 1 77.00,322.00 L77.00,331.76 A4.0,4.0 0 1 1 72.60,331.76 Z" fill="none" stroke="#e8d8d0" stroke-width="1.2"/><circle cx="74.8" cy="335.1" r="2.40" fill="#d8453a"/><line x1="74.8" y1="335.1" x2="74.8" y2="323.8" stroke="#d8453a" stroke-width="1.6"/><path d="M69.4,219.4h3.6 M69.8,223.6h3.2" stroke="#c4c6ca" stroke-width="1.8" fill="none"/><path d="M74.2,219.6l4.6,-2.6 M78.6,216.4l-1.6,9" stroke="#d4d6da" stroke-width="2" fill="none" stroke-linecap="round"/><line x1="356.7" y1="79.3" x2="365.2" y2="79.3" stroke="#d0d0d0" stroke-width="1.1"/><rect x="387.5" y="74.3" width="8" height="7.4" rx="0.8" fill="none" stroke="#a2a2a2" stroke-width="1.3"/><path d="M419.9,74.2 l7.7,7.7 M427.59999999999997,74.2 l-7.7,7.7" stroke="#f0f0f0" stroke-width="1.25" fill="none"/><line x1="774.5" y1="79.3" x2="783.0" y2="79.3" stroke="#d0d0d0" stroke-width="1.1"/><rect x="805.0" y="74.3" width="8" height="7.4" rx="0.8" fill="none" stroke="#a2a2a2" stroke-width="1.3"/><path d="M836.9000000000001,74.2 l7.7,7.7 M844.6,74.2 l-7.7,7.7" stroke="#f0f0f0" stroke-width="1.25" fill="none"/><line x1="1199.3" y1="79.3" x2="1207.8" y2="79.3" stroke="#d0d0d0" stroke-width="1.1"/><rect x="1227.9" y="74.3" width="8" height="7.4" rx="0.8" fill="none" stroke="#a2a2a2" stroke-width="1.3"/><path d="M1261.4,74.2 l7.7,7.7 M1269.1000000000001,74.2 l-7.7,7.7" stroke="#f0f0f0" stroke-width="1.25" fill="none"/><circle cx="410.5" cy="107" r="3.2" fill="none" stroke="#444c5a" stroke-width="1.7"/><circle cx="410.5" cy="107" r="3.9" fill="none" stroke="#444c5a" stroke-width="1" stroke-dasharray="1.6 1.45"/><rect x="422.3" y="104.8" width="5" height="4.4" fill="none" stroke="#444c5a" stroke-width="1.4"/><path d="M420.8,106.6h1.6 M427.2,107.4h1.6 M424.0,103.1v1.4 M425.6,109.5v1.4" stroke="#444c5a" stroke-width="1.4"/><circle cx="410.5" cy="220.3" r="3.2" fill="none" stroke="#444c5a" stroke-width="1.7"/><circle cx="410.5" cy="220.3" r="3.9" fill="none" stroke="#444c5a" stroke-width="1" stroke-dasharray="1.6 1.45"/><rect x="422.3" y="218.10000000000002" width="5" height="4.4" fill="none" stroke="#444c5a" stroke-width="1.4"/><path d="M420.8,219.9h1.6 M427.2,220.70000000000002h1.6 M424.0,216.4v1.4 M425.6,222.8v1.4" stroke="#444c5a" stroke-width="1.4"/><circle cx="410.5" cy="327.5" r="3.2" fill="none" stroke="#444c5a" stroke-width="1.7"/><circle cx="410.5" cy="327.5" r="3.9" fill="none" stroke="#444c5a" stroke-width="1" stroke-dasharray="1.6 1.45"/><rect x="422.3" y="325.3" width="5" height="4.4" fill="none" stroke="#444c5a" stroke-width="1.4"/><path d="M420.8,327.1h1.6 M427.2,327.9h1.6 M424.0,323.6v1.4 M425.6,330.0v1.4" stroke="#444c5a" stroke-width="1.4"/><circle cx="410.5" cy="445" r="3.2" fill="none" stroke="#444c5a" stroke-width="1.7"/><circle cx="410.5" cy="445" r="3.9" fill="none" stroke="#444c5a" stroke-width="1" stroke-dasharray="1.6 1.45"/><rect x="422.3" y="442.8" width="5" height="4.4" fill="none" stroke="#444c5a" stroke-width="1.4"/><path d="M420.8,444.6h1.6 M427.2,445.4h1.6 M424.0,441.1v1.4 M425.6,447.5v1.4" stroke="#444c5a" stroke-width="1.4"/><circle cx="828.8" cy="107" r="3.2" fill="none" stroke="#444c5a" stroke-width="1.7"/><circle cx="828.8" cy="107" r="3.9" fill="none" stroke="#444c5a" stroke-width="1" stroke-dasharray="1.6 1.45"/><rect x="840.5" y="104.8" width="5" height="4.4" fill="none" stroke="#444c5a" stroke-width="1.4"/><path d="M839,106.6h1.6 M845.4,107.4h1.6 M842.2,103.1v1.4 M843.8,109.5v1.4" stroke="#444c5a" stroke-width="1.4"/><circle cx="828.8" cy="223" r="3.2" fill="none" stroke="#444c5a" stroke-width="1.7"/><circle cx="828.8" cy="223" r="3.9" fill="none" stroke="#444c5a" stroke-width="1" stroke-dasharray="1.6 1.45"/><rect x="840.5" y="220.8" width="5" height="4.4" fill="none" stroke="#444c5a" stroke-width="1.4"/><path d="M839,222.6h1.6 M845.4,223.4h1.6 M842.2,219.1v1.4 M843.8,225.5v1.4" stroke="#444c5a" stroke-width="1.4"/><circle cx="828.8" cy="324.5" r="3.2" fill="none" stroke="#444c5a" stroke-width="1.7"/><circle cx="828.8" cy="324.5" r="3.9" fill="none" stroke="#444c5a" stroke-width="1" stroke-dasharray="1.6 1.45"/><rect x="840.5" y="322.3" width="5" height="4.4" fill="none" stroke="#444c5a" stroke-width="1.4"/><path d="M839,324.1h1.6 M845.4,324.9h1.6 M842.2,320.6v1.4 M843.8,327.0v1.4" stroke="#444c5a" stroke-width="1.4"/><circle cx="1252.7" cy="107.2" r="3.2" fill="none" stroke="#444c5a" stroke-width="1.7"/><circle cx="1252.7" cy="107.2" r="3.9" fill="none" stroke="#444c5a" stroke-width="1" stroke-dasharray="1.6 1.45"/><rect x="1264.5" y="105.0" width="5" height="4.4" fill="none" stroke="#444c5a" stroke-width="1.4"/><path d="M1263,106.8h1.6 M1269.4,107.60000000000001h1.6 M1266.2,103.3v1.4 M1267.8,109.7v1.4" stroke="#444c5a" stroke-width="1.4"/><circle cx="1252.7" cy="222" r="3.2" fill="none" stroke="#444c5a" stroke-width="1.7"/><circle cx="1252.7" cy="222" r="3.9" fill="none" stroke="#444c5a" stroke-width="1" stroke-dasharray="1.6 1.45"/><rect x="1264.5" y="219.8" width="5" height="4.4" fill="none" stroke="#444c5a" stroke-width="1.4"/><path d="M1263,221.6h1.6 M1269.4,222.4h1.6 M1266.2,218.1v1.4 M1267.8,224.5v1.4" stroke="#444c5a" stroke-width="1.4"/><circle cx="1252.7" cy="320.5" r="3.2" fill="none" stroke="#444c5a" stroke-width="1.7"/><circle cx="1252.7" cy="320.5" r="3.9" fill="none" stroke="#444c5a" stroke-width="1" stroke-dasharray="1.6 1.45"/><rect x="1264.5" y="318.3" width="5" height="4.4" fill="none" stroke="#444c5a" stroke-width="1.4"/><path d="M1263,320.1h1.6 M1269.4,320.9h1.6 M1266.2,316.6v1.4 M1267.8,323.0v1.4" stroke="#444c5a" stroke-width="1.4"/><g fill="#f2f2f2"><path d="M3.2,745.6 l6.4,-0.9 v6.3 h-6.4z M10.6,744.6 l8.2,-1.1 v7.5 h-8.2z M3.2,752 h6.4 v6.3 l-6.4,-0.9z M10.6,752 h8.2 v7.5 l-8.2,-1.1z"/></g><circle cx="45.5" cy="749" r="4.6" fill="none" stroke="#e0e0e0" stroke-width="1.4"/><line x1="42.2" y1="752.6" x2="38" y2="757.6" stroke="#e0e0e0" stroke-width="1.6"/><path d="M61,746v10 M63.2,748v6" stroke="#8a8e96" stroke-width="1"/><circle cx="229.7" cy="751" r="6" fill="none" stroke="#d8d8d8" stroke-width="1.2"/><path d="M227,750l2.6,3.4l2.8,-4.6" stroke="#d8d8d8" stroke-width="1.2" fill="none"/><circle cx="266" cy="751" r="9.6" fill="#e8453c"/><path d="M266,751 L257.7,746.2 A9.6,9.6 0 0 0 266.0,760.6 Z" fill="#2da94f"/><path d="M266,751 L266,760.6 A9.6,9.6 0 0 0 274.3,746.2 Z" fill="#fdd23e"/><circle cx="266" cy="751" r="4.6" fill="#f4f4f4"/><circle cx="266" cy="751" r="3.5" fill="#3f7ee8"/><rect x="287" y="736" width="36" height="32" fill="#2c323a"/><rect x="297" y="743.5" width="16" height="14" rx="2" fill="#2c6fd0"/><rect x="300.5" y="742.5" width="4" height="16" fill="#e6e6ee"/><rect x="306" y="745" width="4.5" height="11" fill="#e8a040"/><rect x="297" y="752" width="16" height="5.5" rx="1" fill="#d84a38" opacity=".85"/><path d="M335.5,742.6h16.2v16.7h-10l-2,-2.2h-4.2z" fill="#1c9cf0"/><path d="M338.5,747.6h4.5 M339.5,753h4 M344,751.4l3,-1.8h2.4 M345,754.6h4" stroke="#0d4274" stroke-width="1.5" fill="none"/><rect x="250.8" y="765.3" width="31.19999999999999" height="2.7" fill="#2f92e8"/><rect x="290.3" y="765.3" width="29.0" height="2.7" fill="#2f92e8"/><rect x="327.7" y="765.3" width="31.80000000000001" height="2.7" fill="#2f92e8"/><path d="M1093.2,754.6l4.6,-4.6l4.6,4.6" stroke="#e8e8e8" stroke-width="1.3" fill="none"/><rect x="1116.6" y="746" width="11.6" height="12" rx="1.2" fill="#d8402e"/><circle cx="1122.6" cy="752.4" r="2.6" fill="#f4e8e0"/><rect x="1118" y="746" width="5" height="2.4" fill="#6a7fb0"/><circle cx="1144" cy="751.6" r="4.2" fill="none" stroke="#e6e6e6" stroke-width="1.3"/><path d="M1139.6,755.8h3 M1145.6,755.8h3" stroke="#e6e6e6" stroke-width="1.2"/><rect x="1159.2" y="746.6" width="12.6" height="9.4" fill="#f0f0f0"/><rect x="1161.2" y="750.6" width="8.4" height="1.6" fill="#50545c"/><rect x="1162.6" y="756" width="6" height="1.4" fill="#d0d0d0"/><circle cx="1185" cy="753.6" r="3.6" fill="#e8862e"/><circle cx="1184.4" cy="749.8" r="2" fill="#f0e4d8"/><path d="M1196.2,750h2.4l3.4,-3.2v10.8l-3.4,-3.2h-2.4z" fill="#ececec"/><path d="M1204.2,748.4v7" stroke="#ececec" stroke-width="1.1"/><path d="M1211.4,757l3,-9.6l3,9.6 M1212.6,753.6h3.8 M1218.4,747.4v9.8" stroke="#e0e0e0" stroke-width="1.2" fill="none"/><path d="M1317.6,745.4h13.6v10h-7.4l-3,3v-3h-3.2z" fill="#f0f0f0"/><path d="M1319.6,748.4h9.6 M1319.6,751h9.6" stroke="#8a98b0" stroke-width="1"/><circle cx="1330.6" cy="759" r="3.6" fill="#10141c" stroke="#c08050" stroke-width="1.2"/><defs><linearGradient id="icg" x1="0" y1="0" x2="1" y2="1"><stop offset="0" stop-color="#b8d0ee"/><stop offset="1" stop-color="#7f9fce"/></linearGradient></defs><path d="M3.2,5.4 Q3,2.2 7,1.8 L14,0.9 L27.2,4.6 V24.6 L15.6,29 L4.4,24.8z" fill="url(#icg)"/><path d="M6,9.2c2,-2.8 6,-2.6 7.4,-1.6 M6.2,13.4c1.4,-1.6 5,-1.8 7.4,0.4" stroke="#e8f0fa" stroke-width="1.3" fill="none"/><path d="M6.2,15.2c2.4,-2 5.6,-1.6 7.6,0.6v4.6l-7.2,0.6z" fill="#2f6db4"/></svg>
<div id="texts"><span class="t" style="left:85.00px;top:101.05px;font-size:14px;line-height:14px;color:#eceef0;transform:scaleX(0.8700);transform-origin:left center;-webkit-text-stroke:0.3px #eceef0;">CPU Package</span>
<span class="t" style="left:357.50px;top:122.84px;font-size:12px;line-height:12px;color:#b4b8c0;transform:scaleX(0.8928);transform-origin:right center;">Tenperaturt</span>
<span class="t" style="left:383.94px;top:145.04px;font-size:12px;line-height:12px;color:#b4b8c0;transform:scaleX(0.9142);transform-origin:right center;">38.3.9</span>
<span class="t" style="left:373.93px;top:162.54px;font-size:12px;line-height:12px;color:#b4b8c0;transform:scaleX(0.9061);transform-origin:right center;">3.2.35.3</span>
<span class="t" style="left:85.30px;top:213.85px;font-size:14px;line-height:14px;color:#eceef0;transform:scaleX(0.8883);transform-origin:left center;-webkit-text-stroke:0.3px #eceef0;">Core Temperature</span>
<span class="t" style="left:366.14px;top:236.22px;font-size:12px;line-height:12px;color:#b4b8c0;transform:scaleX(0.8819);transform-origin:right center;">43 Smoot</span>
<span class="t" style="left:380.10px;top:252.72px;font-size:12px;line-height:12px;color:#b4b8c0;transform:scaleX(0.8447);transform-origin:right center;">1.3.7.2</span>
<span class="t" style="left:373.43px;top:268.22px;font-size:12px;line-height:12px;color:#b4b8c0;transform:scaleX(0.8762);transform-origin:right center;">3.9.9.48</span>
<span class="t" style="left:85.00px;top:321.05px;font-size:14px;line-height:14px;color:#eceef0;transform:scaleX(0.8700);transform-origin:left center;-webkit-text-stroke:0.3px #eceef0;">CPU Package</span>
<span class="t" style="left:359.46px;top:342.72px;font-size:12px;line-height:12px;color:#b4b8c0;transform:scaleX(0.8615);transform-origin:right center;">540 Smoot</span>
<span class="t" style="left:380.10px;top:370.22px;font-size:12px;line-height:12px;color:#b4b8c0;transform:scaleX(0.8720);transform-origin:right center;">4.3.3 3</span>
<span class="t" style="left:376.76px;top:387.72px;font-size:12px;line-height:12px;color:#b4b8c0;transform:scaleX(0.9591);transform-origin:right center;">43.89.3</span>
<span class="t" style="left:67.20px;top:437.85px;font-size:14px;line-height:14px;color:#eceef0;transform:scaleX(0.8429);transform-origin:left center;-webkit-text-stroke:0.3px #eceef0;">Fan Speeds (RPM)</span>
<span class="t" style="left:157.79px;top:552.00px;font-size:11px;line-height:11px;color:#c8ccd0;transform:scaleX(0.9811);transform-origin:center center;">40%</span>
<span class="t" style="left:321.99px;top:552.00px;font-size:11px;line-height:11px;color:#c8ccd0;transform:scaleX(1.0220);transform-origin:center center;">38%</span>
<span class="t" style="left:139.41px;top:600.65px;font-size:14px;line-height:14px;color:#eceef0;transform:scaleX(0.8476);transform-origin:center center;-webkit-text-stroke:0.3px #eceef0;">CPU Fan</span>
<span class="t" style="left:303.02px;top:600.65px;font-size:14px;line-height:14px;color:#eceef0;transform:scaleX(0.8294);transform-origin:center center;-webkit-text-stroke:0.3px #eceef0;">GPU Fan</span>
<span class="t" style="left:467.00px;top:100.75px;font-size:14px;line-height:14px;color:#eceef0;transform:scaleX(0.9239);transform-origin:left center;-webkit-text-stroke:0.3px #eceef0;">GPU Temperature</span>
<span class="t" style="left:790.71px;top:122.94px;font-size:12px;line-height:12px;color:#c2c6cc;transform:scaleX(0.9295);transform-origin:right center;">Hot Spot</span>
<span class="t" style="left:770.93px;top:145.84px;font-size:12px;line-height:12px;color:#c2c6cc;transform:scaleX(0.8758);transform-origin:right center;">Temperature</span>
<span class="t" style="left:808.26px;top:164.84px;font-size:12px;line-height:12px;color:#c2c6cc;transform:scaleX(0.9746);transform-origin:right center;">311.0</span>
<span class="t" style="left:467.00px;top:216.55px;font-size:14px;line-height:14px;color:#eceef0;transform:scaleX(0.9239);transform-origin:left center;-webkit-text-stroke:0.3px #eceef0;">GPU Temperature</span>
<span class="t" style="left:786.98px;top:236.22px;font-size:12px;line-height:12px;color:#b4b8c0;transform:scaleX(0.8936);transform-origin:right center;">30 Smcie</span>
<span class="t" style="left:803.04px;top:251.72px;font-size:12px;line-height:12px;color:#b4b8c0;transform:scaleX(0.9591);transform-origin:right center;">33.3.8</span>
<span class="t" style="left:795.71px;top:266.22px;font-size:12px;line-height:12px;color:#b4b8c0;transform:scaleX(0.9731);transform-origin:right center;">-3.8.8.3</span>
<span class="t" style="left:466.70px;top:317.05px;font-size:14px;line-height:14px;color:#eceef0;transform:scaleX(0.8754);transform-origin:left center;-webkit-text-stroke:0.3px #eceef0;">GPU Spreds (RPM)</span>
<span class="t" style="left:770.04px;top:341.22px;font-size:12px;line-height:12px;color:#b4b8c0;transform:scaleX(0.9501);transform-origin:right center;">40V Imaatim</span>
<span class="t" style="left:793.43px;top:369.72px;font-size:12px;line-height:12px;color:#b4b8c0;transform:scaleX(0.9153);transform-origin:right center;">3.30.9.3</span>
<span class="t" style="left:790.09px;top:387.62px;font-size:12px;line-height:12px;color:#b4b8c0;transform:scaleX(0.8350);transform-origin:right center;">2.3.3.9.2</span>
<span class="t" style="left:886.30px;top:101.15px;font-size:14px;line-height:14px;color:#eceef0;transform:scaleX(0.9898);transform-origin:left center;-webkit-text-stroke:0.3px #eceef0;">Vemtage</span>
<span class="t" style="left:889.80px;top:130.41px;font-size:10.5px;line-height:10.5px;color:#b2b6be;transform:scaleX(0.9656);transform-origin:left center;">Od Spet</span>
<span class="t" style="left:889.60px;top:148.01px;font-size:10.5px;line-height:10.5px;color:#b2b6be;transform:scaleX(0.9942);transform-origin:left center;">Memory</span>
<span class="t" style="left:889.20px;top:166.51px;font-size:10.5px;line-height:10.5px;color:#b2b6be;transform:scaleX(1.0363);transform-origin:left center;">Gaixare</span>
<span class="t" style="left:1250.60px;top:129.79px;font-size:11px;line-height:11px;color:#b2b6be;transform:scaleX(1.0052);transform-origin:left center;">58</span>
<span class="t" style="left:1250.60px;top:147.89px;font-size:11px;line-height:11px;color:#b2b6be;transform:scaleX(1.0052);transform-origin:left center;">63</span>
<span class="t" style="left:1250.60px;top:165.19px;font-size:11px;line-height:11px;color:#b2b6be;transform:scaleX(1.0052);transform-origin:left center;">38</span>
<span class="t" style="left:885.50px;top:215.95px;font-size:14px;line-height:14px;color:#eceef0;transform:scaleX(0.9102);transform-origin:left center;-webkit-text-stroke:0.3px #eceef0;">Voltage Readings</span>
<span class="t" style="left:889.50px;top:248.91px;font-size:10.5px;line-height:10.5px;color:#b2b6be;transform:scaleX(0.9296);transform-origin:left center;">Vcare</span>
<span class="t" style="left:889.00px;top:265.61px;font-size:10.5px;line-height:10.5px;color:#b2b6be;transform:scaleX(0.8796);transform-origin:left center;">GPU Core</span>
<span class="t" style="left:1250.60px;top:248.49px;font-size:11px;line-height:11px;color:#b2b6be;transform:scaleX(1.0052);transform-origin:left center;">22</span>
<span class="t" style="left:1250.60px;top:264.99px;font-size:11px;line-height:11px;color:#b2b6be;transform:scaleX(1.0052);transform-origin:left center;">18</span>
<span class="t" style="left:884.00px;top:315.15px;font-size:14px;line-height:14px;color:#eceef0;transform:scaleX(0.9248);transform-origin:left center;-webkit-text-stroke:0.3px #eceef0;">Voltage Readings</span>
<span class="t" style="left:888.80px;top:350.55px;font-size:14px;line-height:14px;color:#eceef0;transform:scaleX(0.9519);transform-origin:left center;-webkit-text-stroke:0.3px #eceef0;">Memory Voltage</span>
<span class="t" style="left:889.40px;top:385.81px;font-size:10.5px;line-height:10.5px;color:#b2b6be;transform:scaleX(0.9114);transform-origin:left center;">Vcore</span>
<span class="t" style="left:888.80px;top:403.11px;font-size:10.5px;line-height:10.5px;color:#b2b6be;transform:scaleX(0.8340);transform-origin:left center;">GPU Cors</span>
<span class="t" style="left:889.70px;top:420.71px;font-size:10.5px;line-height:10.5px;color:#b2b6be;transform:scaleX(0.9889);transform-origin:left center;">Memory</span>
<span class="t" style="left:1243.70px;top:384.29px;font-size:11px;line-height:11px;color:#b2b6be;transform:scaleX(1.0025);transform-origin:left center;">053</span>
<span class="t" style="left:1250.20px;top:401.89px;font-size:11px;line-height:11px;color:#b2b6be;transform:scaleX(0.9644);transform-origin:left center;">80</span>
<span class="t" style="left:69.40px;top:743.59px;font-size:16px;line-height:16px;color:#d4d6da;transform:scaleX(0.9429);transform-origin:left center;">Windows</span>
<span class="t" style="left:1225.50px;top:746.70px;font-size:11px;line-height:11px;color:#dcdcdc;transform:scaleX(0.9064);transform-origin:left center;">G4R</span>
<span class="t" style="left:1264.45px;top:739.00px;font-size:11px;line-height:11px;color:#e2e2e2;transform:scaleX(0.8338);transform-origin:center center;">13:5:88</span>
<span class="t" style="left:1256.70px;top:753.40px;font-size:11px;line-height:11px;color:#e2e2e2;transform:scaleX(0.8312);transform-origin:left center;">28.2.9.8003</span>
<span class="t" style="left:0.20px;top:34.75px;font-size:11px;line-height:11px;color:#e4e4e4;transform:scaleX(0.8958);transform-origin:left center;font-weight:bold;">óovleát</span>
<span class="t" style="left:0.60px;top:49.33px;font-size:11.5px;line-height:11.5px;color:#e4e4e4;transform:scaleX(0.9246);transform-origin:left center;font-weight:bold;">huap</span></div>
</body></html>
